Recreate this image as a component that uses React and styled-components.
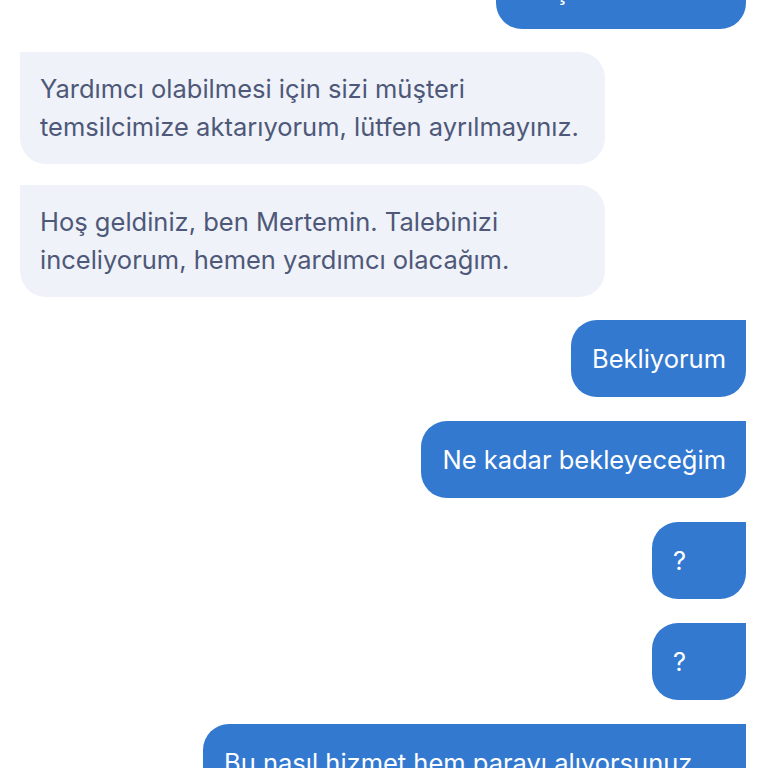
import React from "react";
import styled, { createGlobalStyle } from "styled-components";

const GlobalStyle = createGlobalStyle`
html, body {
  margin: 0;
  height: 100%;
  overflow: hidden;
  background: #ffffff;
}
body {
  font-family: "Inter", "Noto Sans", sans-serif;
  -webkit-font-smoothing: antialiased;
}
`;

const Thread = styled.div`
  display: flex;
  flex-direction: column;
  padding: 0 22px 0 20px;
  margin-top: -48px;
`;

const Bubble = styled.div`
  box-sizing: border-box;
  margin-top: ${(p) => p.$gap}px;
  align-self: ${(p) => (p.$mine ? "flex-end" : "flex-start")};
  max-width: ${(p) => (p.$mine ? "543px" : "585px")};
  min-width: ${(p) => (p.$mine ? "94px" : "0")};
  padding: ${(p) => (p.$mine ? "19.5px 20px 19.5px 21px" : "18px 20px")};
  background: ${(p) => (p.$mine ? "#3379d0" : "#eff2f8")};
  color: ${(p) => (p.$mine ? "#ffffff" : "#4e5878")};
  border-radius: ${(p) => (p.$mine ? "26px 0 26px 26px" : "0 26px 26px 26px")};
  font-size: 25.5px;
  line-height: 38px;
  font-weight: 400;
`;

const messages = [
  { mine: true, text: "Müşteri temsilcisi" },
  { mine: false, text: "Yardımcı olabilmesi için sizi müşteri temsilcimize aktarıyorum, lütfen ayrılmayınız." },
  { mine: false, text: "Hoş geldiniz, ben Mertemin. Talebinizi inceliyorum, hemen yardımcı olacağım." },
  { mine: true, text: "Bekliyorum" },
  { mine: true, text: "Ne kadar bekleyeceğim" },
  { mine: true, text: "?" },
  { mine: true, text: "?" },
  { mine: true, text: "Bu nasıl hizmet hem parayı alıyorsunuz hem de bekletiyorsunuz" },
];

const gapBefore = (msg, prev) => {
  if (!prev) return 0;
  if (msg.mine && prev.mine) return 24;
  if (!msg.mine && !prev.mine) return 21;
  return 23;
};

const App = () => {
  return (
    <>
      <GlobalStyle />
      <Thread>
        {messages.map((m, i) => (
          <Bubble key={i} $mine={m.mine} $gap={gapBefore(m, messages[i - 1])}>
            {m.text}
          </Bubble>
        ))}
      </Thread>
    </>
  );
};

export default App;
